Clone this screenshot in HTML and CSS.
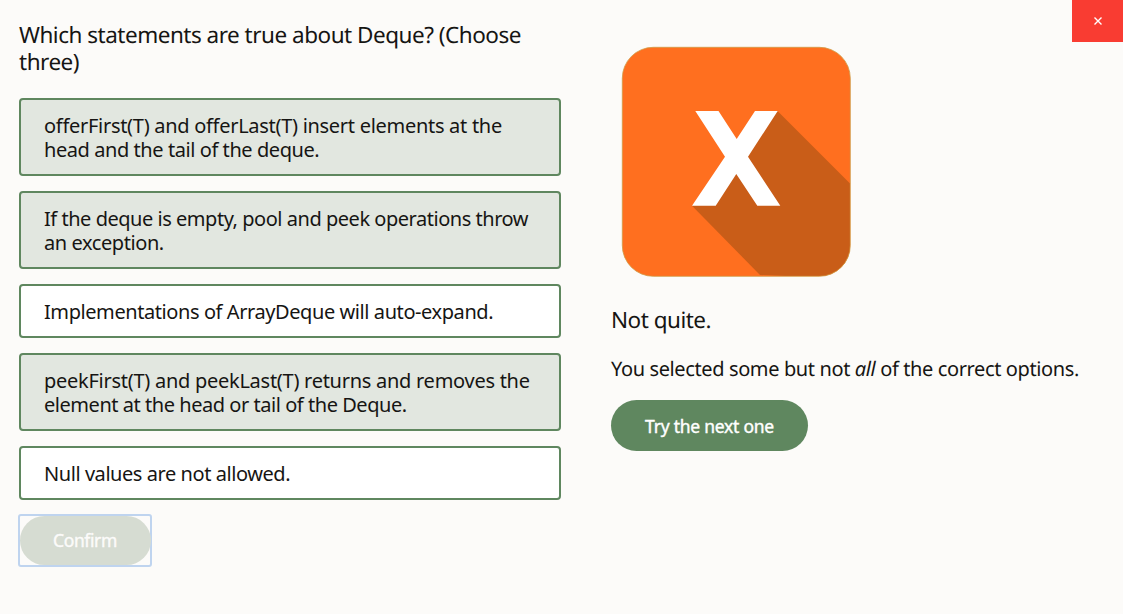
FILE: index.html
```html
<!DOCTYPE html>
<html lang="en">
<head>
<meta charset="utf-8">
<title>Quiz</title>
<link rel="stylesheet" href="styles.css">
</head>
<body>
<main class="quiz">
  <section class="question">
    <h1 class="title">Which statements are true about Deque? (Choose<br>three)</h1>
    <div class="options">
      <button class="option selected"><span class="line a1">offerFirst(T) and offerLast(T) insert elements at the</span><span class="line a2">head and the tail of the deque.</span></button>
      <button class="option selected"><span class="line b1">If the deque is empty, pool and peek operations throw</span><span class="line b2">an exception.</span></button>
      <button class="option"><span class="line c1">Implementations of ArrayDeque will auto-expand.</span></button>
      <button class="option selected"><span class="line d1">peekFirst(T) and peekLast(T) returns and removes the</span><span class="line d2">element at the head or tail of the Deque.</span></button>
      <button class="option"><span class="line e1">Null values are not allowed.</span></button>
    </div>
    <div class="confirm-focus"><button class="confirm">Confirm</button></div>
  </section>
  <section class="feedback">
    <svg class="mark" width="231" height="231" viewBox="0 0 231 231">
      <defs><clipPath id="tile"><rect x="1.3" y="1.3" width="228" height="229" rx="31"/></clipPath></defs>
      <rect x="1.3" y="1.3" width="228" height="229" rx="31" fill="#ff6f1f"/>
      <path clip-path="url(#tile)" d="M156.500 65L229 137.500V230H165L139 229L71 159.700Z" fill="#c95d18"/>
      <path d="M74.300 65H97.500L115.700 93L134 65H156.700L127 110.700L159.300 159.700H136.300L115.300 128L94.700 159.700H71L104 110.700Z" fill="#fff"/>
      <rect x="1.3" y="1.3" width="228" height="229" rx="31" fill="none" stroke="#cf9a45" stroke-width=".8"/>
    </svg>
    <h2 class="result">Not quite.</h2>
    <p class="message">You selected some but not <em>all</em> of the correct options.</p>
    <button class="next">Try the next one</button>
  </section>
  <button class="close" aria-label="Close"><svg width="8" height="8" viewBox="0 0 8 8"><path d="M.5.5l7 7M7.500.5l-7 7" stroke="#fff" stroke-width="1.4"/></svg></button>
</main>
</body>
</html>
```
FILE: styles.css
```css
* { box-sizing: border-box; }
body { margin: 0; background: #fcfbf9; color: #161513; font-family: "Noto Sans", "Open Sans", sans-serif; text-rendering: geometricPrecision; }
button { font: inherit; color: inherit; margin: 0; padding: 0; border: 0; text-align: left; }
.quiz { display: grid; grid-template-columns: 592px 461px 51px; width: 1123px; height: 614px; padding-left: 19px; overflow: hidden; }
.question { padding-top: 21px; width: 542px; }
.title { margin: 0 0 23px; font-size: 22.5px; line-height: 27px; font-weight: 400; letter-spacing: -.49px; white-space: nowrap; }
.line { display: block; white-space: nowrap; }
.a1 { letter-spacing: -.29px; }
.a2 { letter-spacing: -.43px; }
.b1 { letter-spacing: -.47px; }
.b2 { letter-spacing: -.42px; }
.c1 { letter-spacing: -.42px; }
.d1 { letter-spacing: -.27px; }
.d2 { letter-spacing: -.46px; }
.e1 { letter-spacing: -.44px; }
.options { display: flex; flex-direction: column; gap: 15px; }
.option { border: 2px solid #5f875f; border-radius: 4px; background: #fff; padding: 14px 23px 12px; font-size: 20px; line-height: 24px; }
.selected { background: #e2e7e0; }
.confirm-focus { margin: 14px 0 0 -1px; width: 134px; height: 53px; border: 2px solid #bfd4ef; border-radius: 3px; }
.confirm { display: block; width: 131px; height: 49px; margin-left: -.5px; padding-bottom: 1px; border-radius: 25px; background: #d6dcd2; color: #fcfbfa; text-align: center; font-size: 17.5px; letter-spacing: -.4px; -webkit-text-stroke: .4px currentColor; }
.feedback { padding-top: 46px; white-space: nowrap; }
.mark { display: block; margin-left: 10px; }
.result { margin: 28px 0 0; font-size: 22.5px; line-height: 30px; font-weight: 400; letter-spacing: -.5px; }
.message { margin: 22px 0 0; font-size: 20px; line-height: 24px; letter-spacing: -.38px; }
.next { display: block; width: 197px; height: 51px; margin-top: 19px; border-radius: 26px; background: #5f875f; color: #fff; text-align: center; font-size: 17.5px; letter-spacing: -.25px; -webkit-text-stroke: .4px currentColor; }
.close { display: flex; align-items: center; justify-content: center; width: 51px; height: 42px; background: #f93c32; }
```
